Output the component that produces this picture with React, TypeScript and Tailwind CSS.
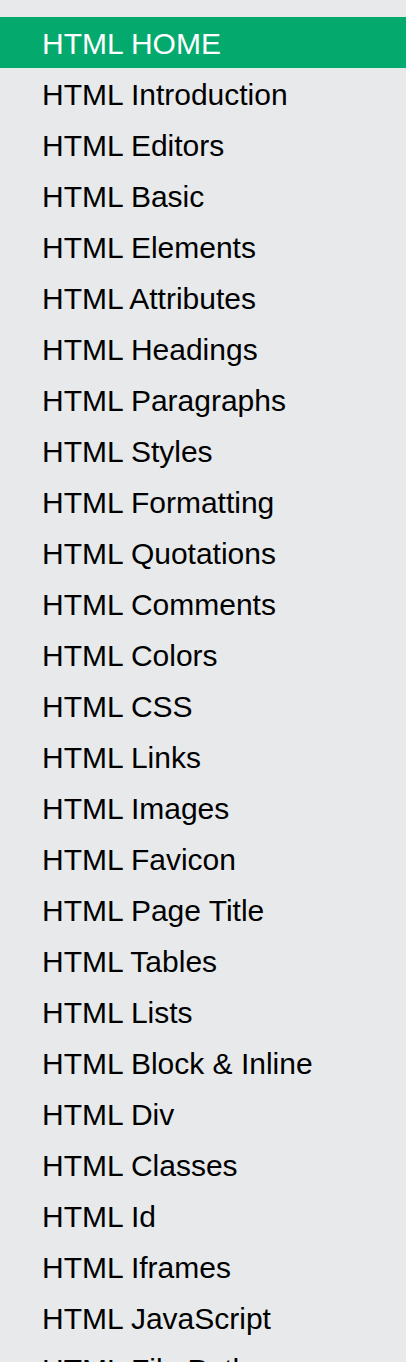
import React from 'react';

const items = [
  'HTML HOME',
  'HTML Introduction',
  'HTML Editors',
  'HTML Basic',
  'HTML Elements',
  'HTML Attributes',
  'HTML Headings',
  'HTML Paragraphs',
  'HTML Styles',
  'HTML Formatting',
  'HTML Quotations',
  'HTML Comments',
  'HTML Colors',
  'HTML CSS',
  'HTML Links',
  'HTML Images',
  'HTML Favicon',
  'HTML Page Title',
  'HTML Tables',
  'HTML Lists',
  'HTML Block & Inline',
  'HTML Div',
  'HTML Classes',
  'HTML Id',
  'HTML Iframes',
  'HTML JavaScript',
  'HTML File Paths',
];

const App: React.FC = () => {
  return (
    <div className="w-[406px] h-[1362px] overflow-hidden bg-[#e7e9eb] pt-[17px] font-['Liberation_Sans',Arial,sans-serif]">
      {/* Sidebar links */}
      <nav className="flex flex-col">
        {items.map((label, i) => (
          <a
            key={label}
            href="#"
            className={
              i === 0
                ? 'flex items-center h-[51px] pl-[42px] pt-[2px] text-[30px] leading-none text-white bg-[#04aa6d]'
                : 'flex items-center h-[51px] pl-[42px] pt-[2px] text-[30px] leading-none text-black'
            }
          >
            {label}
          </a>
        ))}
      </nav>
    </div>
  );
};

export default App;
